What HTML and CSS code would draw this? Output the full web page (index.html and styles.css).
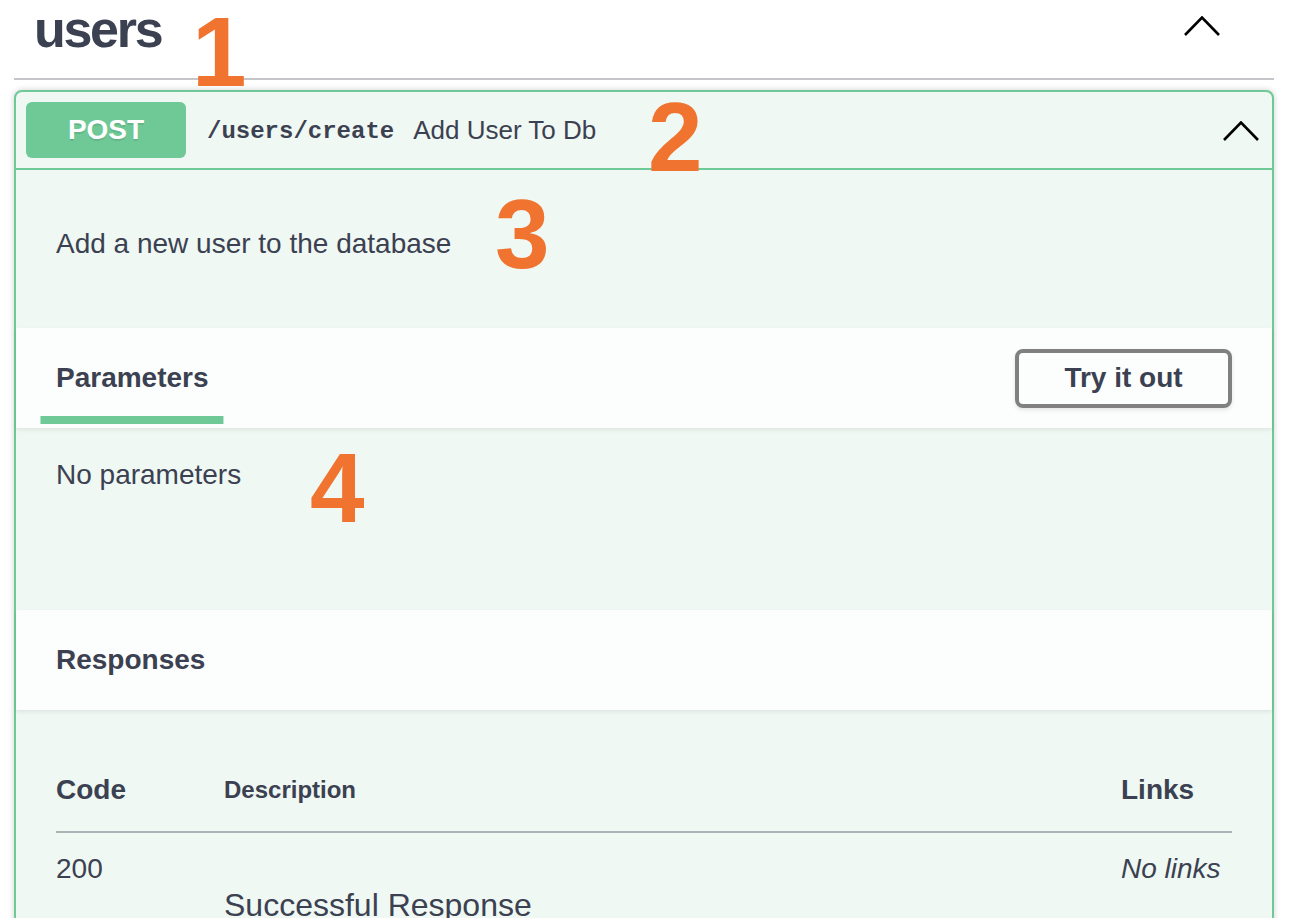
FILE: index.html
```html
<!DOCTYPE html>
<html lang="en">
<head>
<meta charset="utf-8">
<title>users - Swagger UI</title>
<link rel="stylesheet" href="styles.css">
</head>
<body>
<div class="page">
  <div class="tag-section">
    <div class="tag-header">
      <h3 class="tag-title">users</h3>
      <svg class="chevron chevron-tag" width="36" height="20" viewBox="0 0 36 20"><polyline points="1,19 18,1.5 35,19" fill="none" stroke="#000" stroke-width="2.6"/></svg>
    </div>

    <div class="opblock">
      <div class="summary">
        <span class="method">POST</span>
        <span class="path">/users/create</span>
        <span class="summary-desc">Add User To Db</span>
        <svg class="chevron chevron-op" width="36" height="20" viewBox="0 0 36 20"><polyline points="1,19 18,1.5 35,19" fill="none" stroke="#000" stroke-width="2.6"/></svg>
      </div>

      <div class="description">
        <p>Add a new user to the database</p>
      </div>

      <div class="section-header">
        <h4 class="tab-item"><span class="tab-label">Parameters</span></h4>
        <button class="try-out">Try it out</button>
      </div>

      <div class="params-body">
        <p>No parameters</p>
      </div>

      <div class="section-header responses-header">
        <h4 class="section-title">Responses</h4>
      </div>

      <div class="responses-inner">
        <table class="responses-table">
          <colgroup>
            <col class="col-code">
            <col class="col-desc">
            <col class="col-links">
          </colgroup>
          <thead>
            <tr>
              <th class="th-code">Code</th>
              <th class="th-desc">Description</th>
              <th class="th-links">Links</th>
            </tr>
          </thead>
          <tbody>
            <tr>
              <td class="td-code">200</td>
              <td class="td-desc"><p>Successful Response</p></td>
              <td class="td-links"><i>No links</i></td>
            </tr>
          </tbody>
        </table>
      </div>
    </div>
  </div>

  <div class="annotations">
    <span class="num num-1">1</span>
    <span class="num num-2">2</span>
    <span class="num num-3">3</span>
    <span class="num num-4">4</span>
  </div>
</div>
</body>
</html>
```

FILE: styles.css
```css
* { box-sizing: border-box; }

html, body {
  margin: 0;
  padding: 0;
  background: #ffffff;
}

body {
  font-family: "Liberation Sans", Arial, Helvetica, sans-serif;
  color: #3b4151;
}

.page {
  position: relative;
  min-height: 918px;
  overflow: hidden;
}

.tag-section {
  margin: 0 28px 0 14px;
}

.tag-header {
  display: flex;
  justify-content: space-between;
  align-items: flex-start;
  height: 80px;
  border-bottom: 2px solid #c5c6ca;
}

.tag-title {
  margin: 0 0 0 20px;
  font-size: 52px;
  line-height: 58px;
  font-weight: 700;
  letter-spacing: -2.3px;
}

.chevron { display: block; flex: none; }

.chevron-tag {
  margin-top: 16px;
  margin-right: 54px;
}

.opblock {
  margin-top: 10px;
  border: 2px solid #6fc996;
  border-radius: 8px;
  background: #eff8f3;
  box-shadow: 0 0 6px rgba(0, 0, 0, 0.19);
  padding-bottom: 60px;
}

.summary {
  display: flex;
  align-items: center;
  padding: 10px;
  border-bottom: 2px solid #6fc996;
}

.method {
  flex: none;
  width: 160px;
  height: 56px;
  border-radius: 6px;
  background: #6fc996;
  color: #ffffff;
  font-size: 28px;
  font-weight: 700;
  line-height: 56px;
  text-align: center;
  text-shadow: 0 2px 0 rgba(0, 0, 0, 0.1);
}

.path {
  margin-left: 21px;
  font-family: "Liberation Mono", "Courier New", monospace;
  font-size: 24px;
  font-weight: 700;
  position: relative;
  top: 1px;
}

.summary-desc {
  margin-left: 19px;
  font-size: 26px;
}

.chevron-op {
  margin-left: auto;
  margin-right: 3px;
  margin-top: 2px;
}

.description {
  padding: 54px 40px 64px;
}

.description p,
.params-body p {
  margin: 0;
  font-size: 28px;
  line-height: 40px;
}

.section-header {
  display: flex;
  align-items: center;
  justify-content: space-between;
  height: 100px;
  padding: 0 40px;
  background: rgba(255, 255, 255, 0.8);
  box-shadow: 0 2px 4px rgba(0, 0, 0, 0.08);
  position: relative;
}

.tab-item {
  margin: 0;
  font-size: 28px;
  line-height: 34px;
  font-weight: 700;
}

.tab-label {
  display: inline-block;
  position: relative;
}

.tab-label::after {
  content: "";
  position: absolute;
  left: 50%;
  top: 55px;
  width: 120%;
  height: 8px;
  transform: translateX(-50%);
  background: #6fc996;
}

.try-out {
  width: 217px;
  height: 59px;
  border: 4px solid #808080;
  border-radius: 8px;
  background: transparent;
  color: #3b4151;
  font-family: "Liberation Sans", Arial, Helvetica, sans-serif;
  font-size: 28px;
  font-weight: 700;
  box-shadow: 0 2px 4px rgba(0, 0, 0, 0.1);
  padding: 0;
}

.params-body {
  padding: 27px 40px 115px;
}

.section-title {
  margin: 0;
  font-size: 28px;
  line-height: 34px;
  font-weight: 700;
}

.responses-inner {
  padding: 39px 40px 0;
}

.responses-table {
  width: 100%;
  border-collapse: collapse;
  table-layout: fixed;
}

.col-code { width: 168px; }
.col-links { width: 111px; }

.responses-table th {
  padding: 24px 0;
  text-align: left;
  vertical-align: bottom;
  font-weight: 700;
  line-height: 34px;
  border-bottom: 2px solid #adb3b6;
}

.th-code, .th-links { font-size: 28px; }
.th-desc { font-size: 24px; }

.responses-table td {
  padding: 19px 0;
  vertical-align: top;
  font-size: 28px;
  line-height: 34px;
}

.td-desc p {
  margin: 34px 0 0;
  font-size: 32px;
  line-height: 38px;
}

.td-links i { font-style: italic; }

.annotations {
  position: absolute;
  inset: 0;
  pointer-events: none;
}

.num {
  position: absolute;
  font-family: "Liberation Sans", Arial, Helvetica, sans-serif;
  font-weight: 700;
  font-size: 98px;
  line-height: 80px;
  color: #f07430;
}

.num-1 { left: 192px; top: 12px; }
.num-2 { left: 648px; top: 97px; }
.num-3 { left: 495px; top: 194px; }
.num-4 { left: 310px; top: 448px; }
```
